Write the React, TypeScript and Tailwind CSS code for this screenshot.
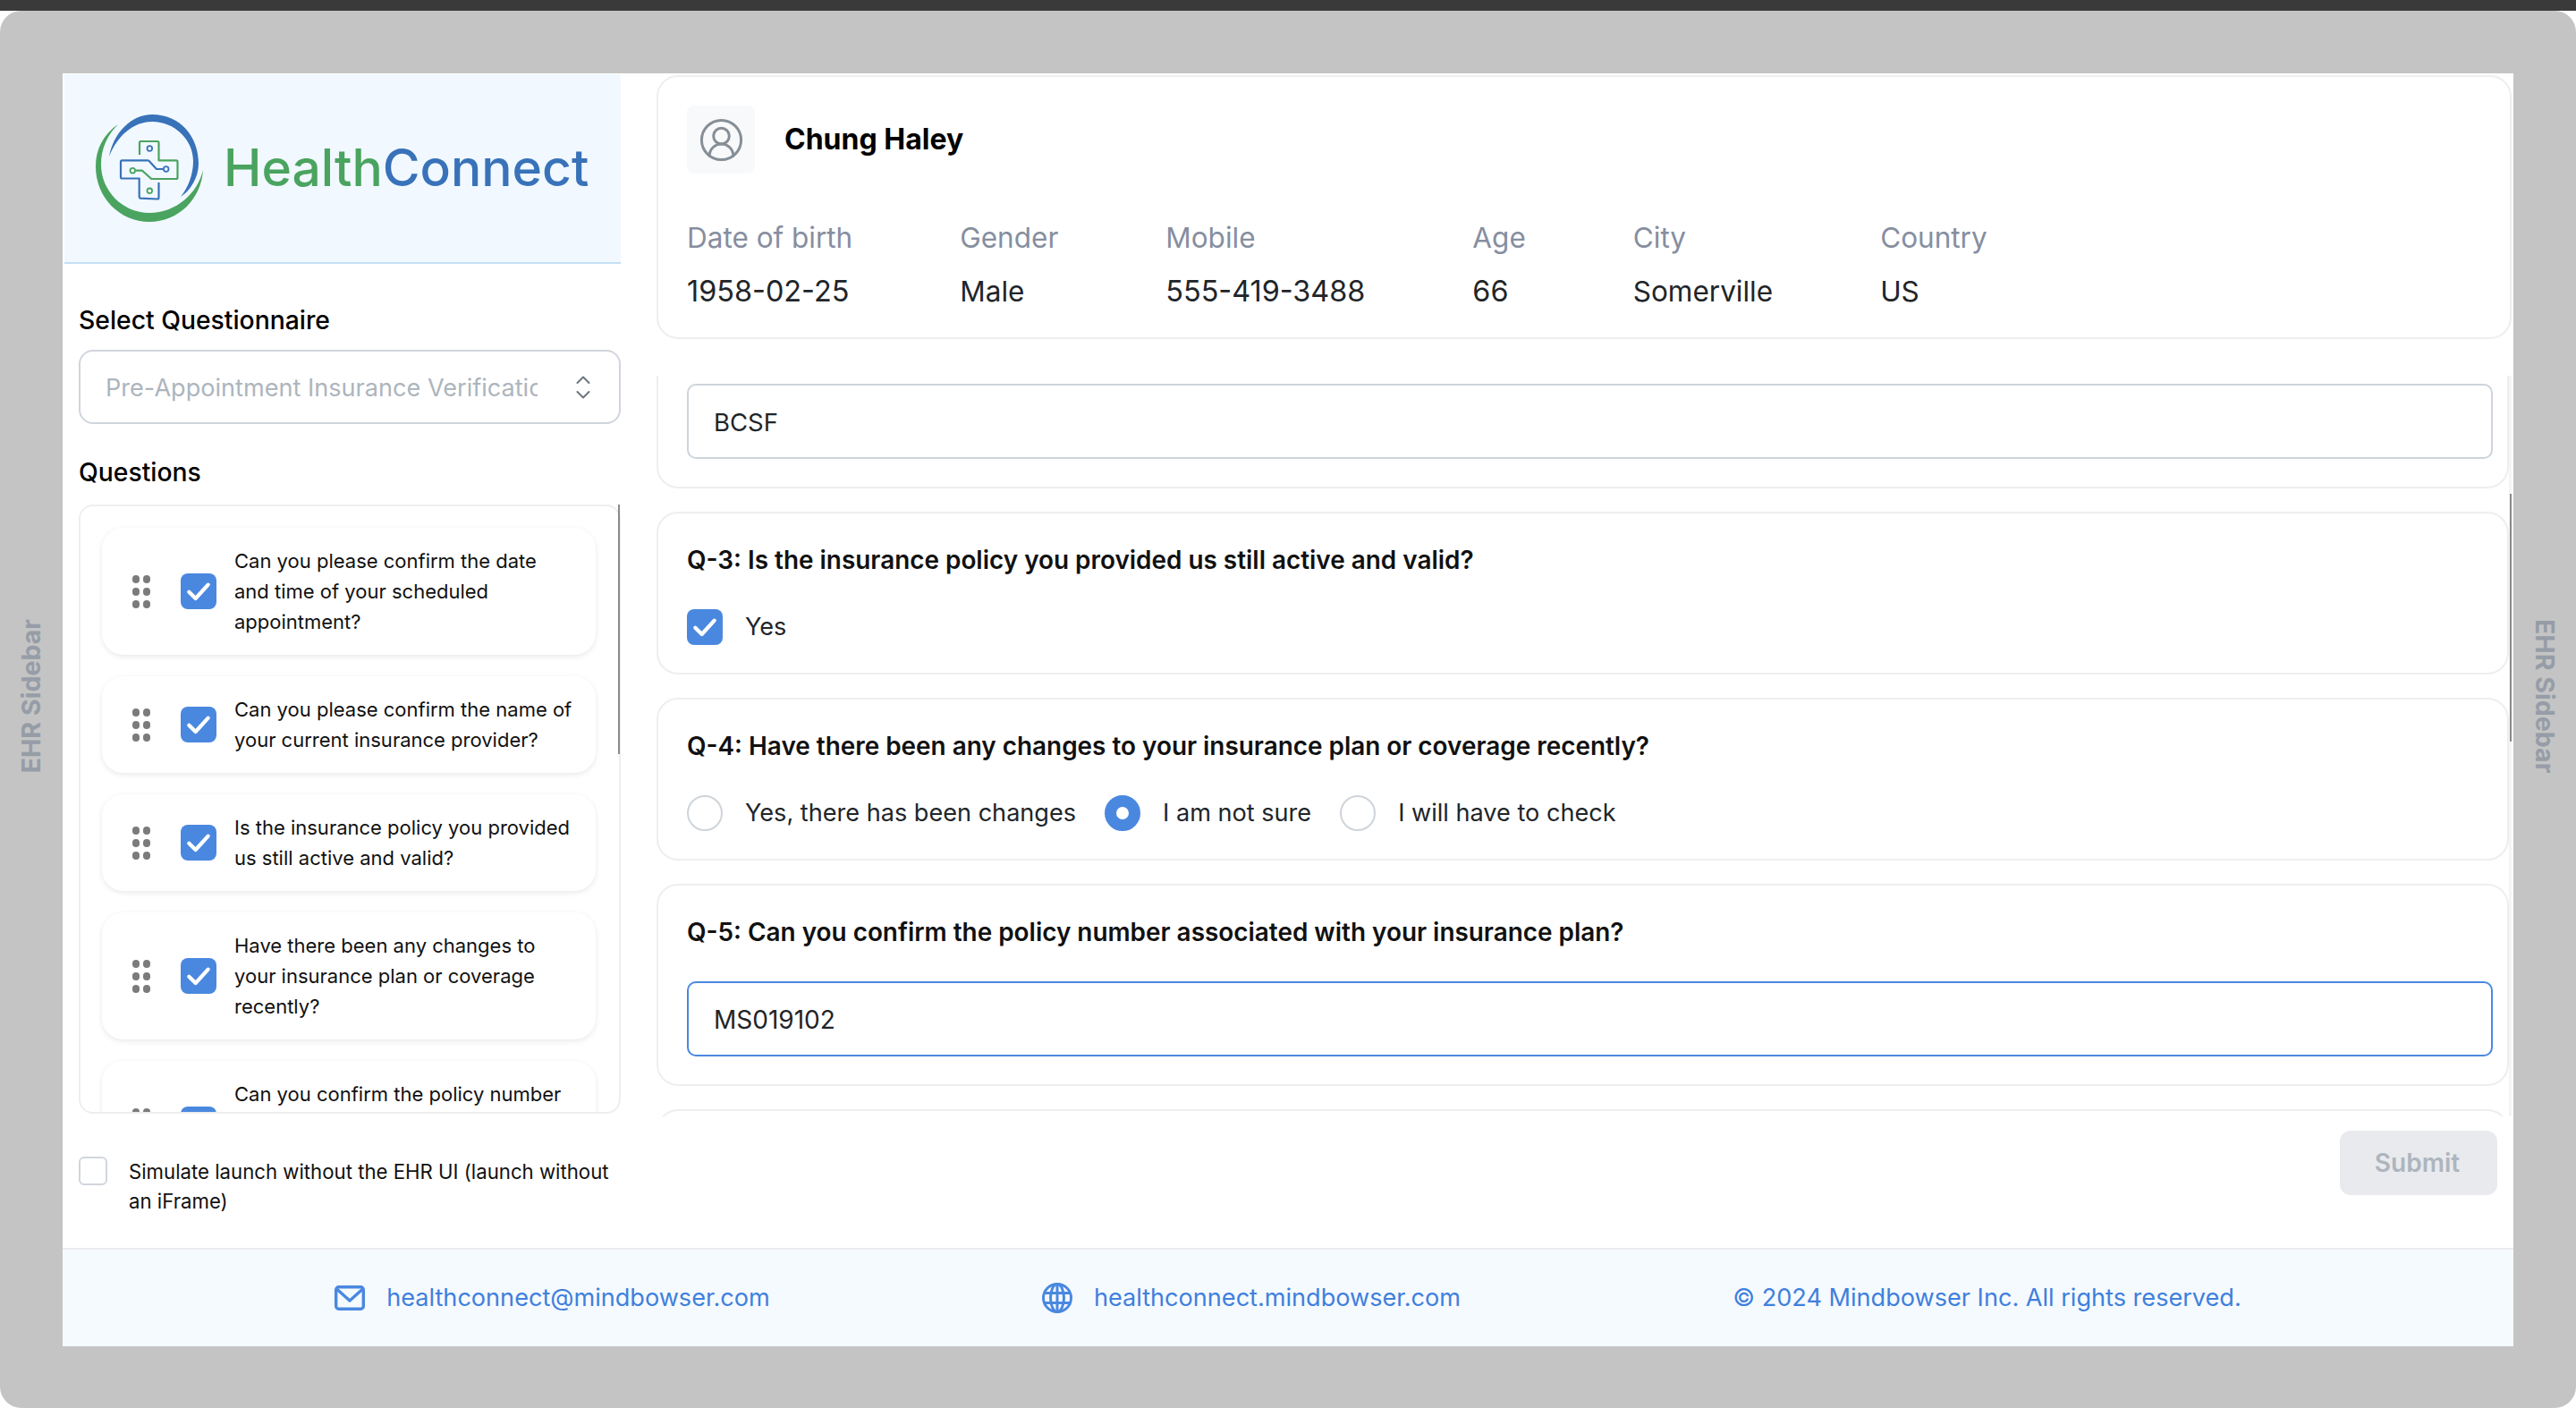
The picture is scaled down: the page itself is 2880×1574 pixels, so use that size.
import { CircleUserRound } from "lucide-react";

const questions = [
  "Can you please confirm the date and time of your scheduled appointment?",
  "Can you please confirm the name of your current insurance provider?",
  "Is the insurance policy you provided us still active and valid?",
  "Have there been any changes to your insurance plan or coverage recently?",
  "Can you confirm the policy number associated with your insurance plan?",
];

const patient = [
  { label: "Date of birth", value: "1958-02-25", numeric: true },
  { label: "Gender", value: "Male" },
  { label: "Mobile", value: "555-419-3488", numeric: true },
  { label: "Age", value: "66", numeric: true },
  { label: "City", value: "Somerville" },
  { label: "Country", value: "US" },
];

function Logo() {
  return (
    <svg width="120" height="120" viewBox="0 0 120 120" fill="none" className="shrink-0">
      <path d="M15 47C20 20 40 0 63 0C95 0 115 25 115 55C115 70 106 85 95 92C103 82 109 68 109 52C109 28 88 8 63 8C42 8 24 24 15 47Z" fill="#3872b9" />
      <path d="M25 11C9 22 0 38 0 58C0 93 27 120 60 120C92 120 118 95 120 62C114 88 90 110 60 110C30 110 6 85 6 56C6 38 13 23 25 11Z" fill="#4aa45f" />
      {/* cross outline */}
      <path d="M49 45V31.5Q49 30 50.5 30H69Q70.5 30 70.5 31.5V51.3H90Q91.5 51.3 91.5 53V70.5Q91.5 72 90 72H62.3L52 62.7H45" stroke="#4aa45f" strokeWidth="2.2" strokeLinejoin="round" />
      <path d="M59 51.3H29.5Q28 51.3 28 53V70Q28 71.5 29.5 71.5H48.7V92Q48.7 93.5 50 93.7L69 94.5Q70.5 94.5 70.5 93V76M59 51.3L68 61H75.3" stroke="#3872b9" strokeWidth="2.2" strokeLinejoin="round" />
      <circle cx="60.3" cy="38" r="2.8" stroke="#3872b9" strokeWidth="1.8" />
      <circle cx="60.3" cy="85.3" r="2.8" stroke="#4aa45f" strokeWidth="1.8" />
      <circle cx="41.3" cy="62.7" r="2.8" stroke="#4aa45f" strokeWidth="1.8" />
      <circle cx="78.7" cy="61" r="2.8" stroke="#3872b9" strokeWidth="1.8" />
    </svg>
  );
}

function Check() {
  return (
    <svg width="32" height="32" viewBox="0 0 24 24" fill="none">
      <path d="M4 12.5L9.5 18L20 6.5" stroke="white" strokeWidth="3.2" strokeLinecap="round" strokeLinejoin="round" />
    </svg>
  );
}

function CheckedBox() {
  return (
    <div className="flex h-[40px] w-[40px] shrink-0 items-center justify-center rounded-[8px] bg-[#4a88e0]">
      <Check />
    </div>
  );
}

function DragDots() {
  return (
    <div className="grid w-[20px] shrink-0 grid-cols-2 gap-x-[4px] gap-y-[5px]">
      {Array.from({ length: 6 }).map((_, i) => (
        <span key={i} className="h-[9px] w-[8px] rounded-full bg-[#7b7b7b]" />
      ))}
    </div>
  );
}

function Radio({ label, checked }: { label: string; checked?: boolean }) {
  return (
    <div className="flex items-center gap-[25px]">
      {checked ? (
        <span className="h-[40px] w-[40px] shrink-0 rounded-full border-[13px] border-[#4a88e0] bg-white" />
      ) : (
        <span className="h-[40px] w-[40px] shrink-0 rounded-full border-2 border-[#ced4da] bg-white" />
      )}
      <span className="text-[27.1px] leading-[40px] text-[#212529]">{label}</span>
    </div>
  );
}

function QuestionList() {
  return (
    <div className="relative mt-[16px]">
      <div className="h-[681px] overflow-hidden rounded-[16px] border-2 border-[#eeeeee] pl-[24px] pt-[24px]">
        <div className="flex w-[552px] flex-col gap-[24px]">
          {questions.map((q) => (
            <div key={q} className="flex items-center rounded-[24px] bg-white py-[20px] pl-[34px] shadow-[0_2px_6px_rgba(0,0,0,0.09)]">
              <DragDots />
              <div className="ml-[34px]">
                <CheckedBox />
              </div>
              <p className="ml-[20px] w-[380px] text-[22px] leading-[34px] text-[#111111]">{q}</p>
            </div>
          ))}
        </div>
      </div>
      {/* scrollbar thumb */}
      <div className="absolute right-[1px] top-0 h-[279px] w-[2px] bg-[#8a8a8a]" />
    </div>
  );
}

function SideLabel({ flip }: { flip?: boolean }) {
  return (
    <div className="flex w-[70px] shrink-0 items-center justify-center pb-[30px]">
      <span className={`text-[28.6px] font-bold leading-[36px] text-[#969da7] [writing-mode:vertical-rl] ${flip ? "rotate-180" : ""}`}>
        EHR Sidebar
      </span>
    </div>
  );
}

export default function App() {
  return (
    <div className="flex h-screen w-screen flex-col overflow-hidden bg-white font-['Inter',sans-serif]">
      <div className="h-[12px] shrink-0 bg-[#3a3a3a]" />
      <div className="flex flex-1 rounded-[24px] bg-[#c4c4c4] pb-[69px] pt-[70px]">
        <SideLabel flip />

        <div className="flex min-w-0 flex-1 flex-col bg-white">
          <div className="flex h-[1313px] min-h-0">
            {/* left column */}
            <div className="w-[664px] shrink-0 pl-[2px] pt-[1px]">
              <div className="flex h-[212px] w-[622px] items-center border-b-2 border-[#c4dff5] bg-[#f1f8ff] pl-[35px]">
                <Logo />
                <div className="ml-[23px] text-[57px] font-medium leading-[64px]">
                  <span className="text-[#4aa45f]">Health</span>
                  <span className="text-[#3872b9]">Connect</span>
                </div>
              </div>

              <div className="ml-[16px] w-[606px]">
                <h2 className="mt-[43px] text-[28.3px] font-medium leading-[40px] text-black">Select Questionnaire</h2>
                <div className="mt-[13px] flex h-[83px] items-center rounded-[16px] border-2 border-[#d0d5dd] pl-[28px]">
                  <span className="w-[483px] overflow-hidden whitespace-nowrap pt-[3px] text-[27.1px] text-[#adb5bd]">
                    Pre-Appointment Insurance Verification
                  </span>
                  <svg width="16" height="26" viewBox="0 0 16 26" fill="none" className="ml-[43px]">
                    <path d="M1.5 8L8 1.5L14.5 8M1.5 18L8 24.5L14.5 18" stroke="#6c757d" strokeWidth="2" strokeLinecap="round" strokeLinejoin="round" />
                  </svg>
                </div>

                <h2 className="mt-[34px] text-[28.3px] font-medium leading-[40px] text-black">Questions</h2>
                <QuestionList />

                <div className="mt-[48px] flex gap-[24px]">
                  <span className="h-[32px] w-[32px] shrink-0 rounded-[6px] border-2 border-[#d0d5dd] bg-white" />
                  <p className="text-[22.2px] leading-[33px] text-[#111111]">
                    Simulate launch without the EHR UI (launch without an iFrame)
                  </p>
                </div>
              </div>
            </div>

            {/* right column */}
            <div className="relative flex min-w-0 flex-1 flex-col pr-[2px] pt-[2px]">
              <div className="h-[295px] rounded-[24px] border-2 border-[#eeeeee] px-[32px] pt-[32px]">
                <div className="flex items-center gap-[33px]">
                  <div className="flex h-[76px] w-[76px] items-center justify-center rounded-[8px] bg-[#f8f9fb]">
                    <CircleUserRound size={53} strokeWidth={1.35} className="text-[#868e96]" />
                  </div>
                  <span className="text-[32px] font-bold leading-[44px] text-black">Chung Haley</span>
                </div>
                <div className="mt-[50px] flex gap-[120px]">
                  {patient.map((p) => (
                    <div key={p.label}>
                      <div className="text-[31.5px] leading-[44px] text-[#868e9f]">{p.label}</div>
                      <div className={`mt-[16px] leading-[44px] text-[#212529] ${p.numeric ? "text-[32.4px]" : "text-[31.5px]"}`}>{p.value}</div>
                    </div>
                  ))}
                </div>
              </div>

              <div className="mt-[41px] h-[828px] overflow-hidden border-r-[3px] border-[#f5f5f5]">
                <div className="flex flex-col gap-[26px]">
                  <div className="rounded-b-[24px] border-2 border-t-0 border-[#eeeeee] pb-[31px] pl-[32px] pr-[16px] pt-[9px]">
                    <input readOnly value="BCSF" className="h-[84px] w-full rounded-[10px] border-2 border-[#ced4da] px-[28px] pt-[2px] text-[27.5px] text-[#212529] outline-none" />
                  </div>

                  <div className="h-[182px] rounded-[24px] border-2 border-[#eeeeee] px-[32px] pt-[32px]">
                    <h3 className="text-[27.9px] font-semibold leading-[40px] text-[#111111]">Q-3: Is the insurance policy you provided us still active and valid?</h3>
                    <div className="mt-[35px] flex items-center gap-[25px]">
                      <CheckedBox />
                      <span className="text-[27.1px] leading-[40px] text-[#212529]">Yes</span>
                    </div>
                  </div>

                  <div className="h-[182px] rounded-[24px] border-2 border-[#eeeeee] px-[32px] pt-[32px]">
                    <h3 className="text-[27.9px] font-semibold leading-[40px] text-[#111111]">Q-4: Have there been any changes to your insurance plan or coverage recently?</h3>
                    <div className="mt-[35px] flex items-center gap-[32px]">
                      <Radio label="Yes, there has been changes" />
                      <Radio label="I am not sure" checked />
                      <Radio label="I will have to check" />
                    </div>
                  </div>

                  <div className="h-[226px] rounded-[24px] border-2 border-[#eeeeee] pl-[32px] pr-[16px] pt-[32px]">
                    <h3 className="text-[27.9px] font-semibold leading-[40px] text-[#111111]">Q-5: Can you confirm the policy number associated with your insurance plan?</h3>
                    <input readOnly value="MS019102" className="mt-[35px] h-[84px] w-full rounded-[10px] border-2 border-[#4a88e0] px-[28px] pt-[2px] text-[28px] text-[#212529] outline-none" />
                  </div>

                  <div className="h-[120px] rounded-t-[24px] border-2 border-b-0 border-[#eeeeee]" />
                </div>
              </div>
              {/* scrollbar thumb */}
              <div className="absolute right-[2px] top-[470px] h-[277px] w-[2px] bg-[#8a8a8a]" />

              <div className="mt-[16px] flex justify-end pr-[16px]">
                <button className="h-[72px] w-[176px] rounded-[12px] bg-[#e9eaee] pr-[3px] text-[28px] font-semibold text-[#adb5bd]">Submit</button>
              </div>
            </div>
          </div>

          {/* footer */}
          <div className="flex h-[110px] items-center justify-evenly border-t-2 border-[#e9ebee] bg-[#f5faff] text-[27.1px] text-[#3f80dc]">
            <div className="flex items-center gap-[24px]">
              <svg width="34" height="28" viewBox="0 0 34 28" fill="none">
                <rect x="1.7" y="1.7" width="30.6" height="24.6" rx="3" stroke="#4a88e0" strokeWidth="3.4" />
                <path d="M2.5 4L17 17L31.5 4" stroke="#4a88e0" strokeWidth="3.4" strokeLinejoin="round" />
              </svg>
              <span>healthconnect@mindbowser.com</span>
            </div>
            <div className="flex items-center gap-[24px]">
              <svg width="34" height="34" viewBox="0 0 34 34" fill="none" stroke="#4a88e0" strokeWidth="3">
                <circle cx="17" cy="17" r="15.5" />
                <ellipse cx="17" cy="17" rx="7.5" ry="15.5" />
                <path d="M17 1.5V32.5M3 11.5H31M3 22.5H31" />
              </svg>
              <span>healthconnect.mindbowser.com</span>
            </div>
            <span>© 2024 Mindbowser Inc. All rights reserved.</span>
          </div>
        </div>

        <SideLabel />
      </div>
    </div>
  );
}
